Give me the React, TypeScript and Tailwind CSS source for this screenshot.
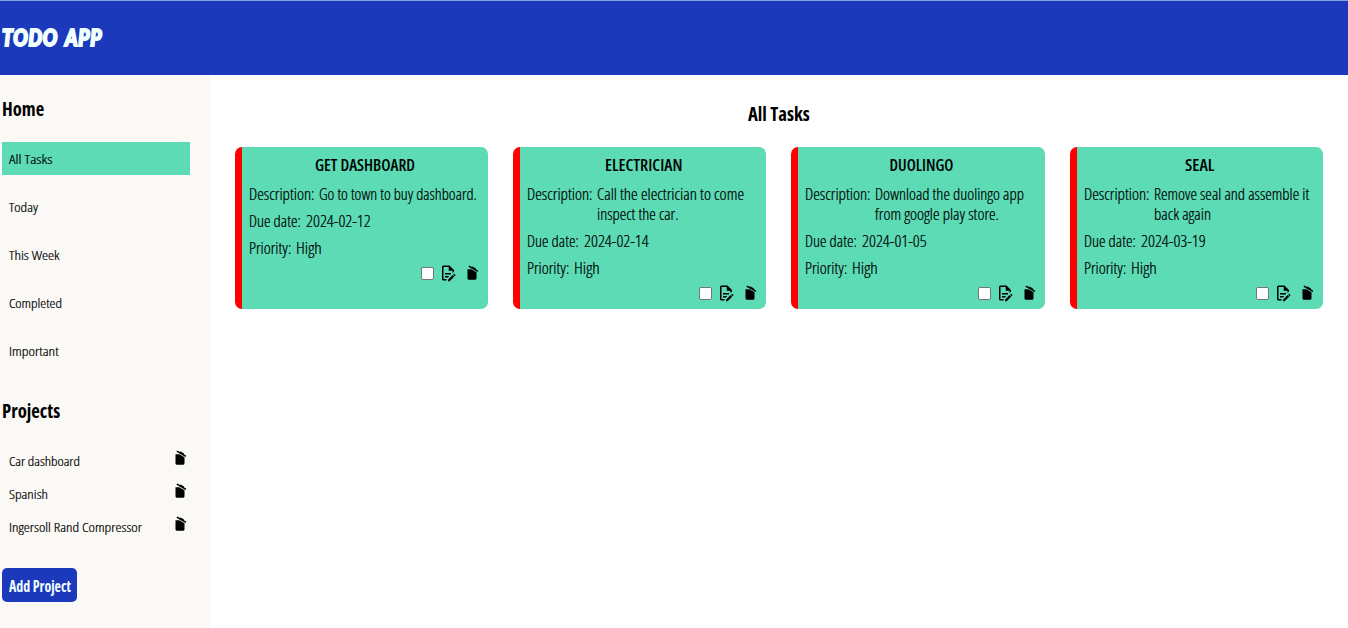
import { useLayoutEffect, useRef, useState } from "react";

type FitProps = { text: string; box: string; className?: string };

// Text condensed horizontally so that it fills the width of its box.
function Fit({ text, box, className = "" }: FitProps) {
  const outer = useRef<HTMLSpanElement>(null);
  const inner = useRef<HTMLSpanElement>(null);
  const [scale, setScale] = useState(1);

  useLayoutEffect(() => {
    if (outer.current && inner.current) {
      setScale(outer.current.offsetWidth / inner.current.offsetWidth);
    }
  }, [text]);

  return (
    <span ref={outer} className={`block shrink-0 whitespace-nowrap ${box} ${className}`}>
      <span
        ref={inner}
        className="inline-block origin-left align-top"
        style={{ transform: `scaleX(${scale})` }}
      >
        {text}
      </span>
    </span>
  );
}

function TrashIcon() {
  return (
    <svg viewBox="0 0 24 24" className="size-[18px] shrink-0 fill-black">
      <path d="M20.37,8.91L19.37,10.64L7.24,3.64L8.24,1.91L11.28,3.66L12.64,3.29L16.97,5.79L17.34,7.16L20.37,8.91M6,19V7H11.07L18,11V19A2,2 0 0,1 16,21H8A2,2 0 0,1 6,19Z" />
    </svg>
  );
}

function EditIcon() {
  return (
    <svg viewBox="0 0 24 24" className="size-[18px] shrink-0 fill-black">
      <path d="M8,12H16V14H8V12M10,20H6V4H13V9H18V12.1L20,10.1V8L14,2H6A2,2 0 0,0 4,4V20A2,2 0 0,0 6,22H10V20M8,18H12.1L13,17.1V16H8V18M20.2,13C20.3,13 20.5,13.1 20.6,13.2L21.9,14.5C22.1,14.7 22.1,15.1 21.9,15.3L20.9,16.3L18.8,14.2L19.8,13.2C19.9,13.1 20,13 20.2,13M20.2,16.9L14.1,23H12V20.9L18.1,14.8L20.2,16.9Z" />
    </svg>
  );
}

const filters = [
  { text: "All Tasks", box: "w-[43px]", active: true },
  { text: "Today", box: "w-[29px]" },
  { text: "This Week", box: "w-[50px]" },
  { text: "Completed", box: "w-[53px]" },
  { text: "Important", box: "w-[50px]" },
];

const projects = [
  { text: "Car dashboard", box: "w-[71px]" },
  { text: "Spanish", box: "w-[39px]" },
  { text: "Ingersoll Rand Compressor", box: "w-[133px]" },
];

const tasks = [
  {
    title: { text: "GET DASHBOARD", box: "w-[100px]" },
    lines: [{ text: "Go to town to buy dashboard.", box: "w-[158px]" }],
    due: "2024-02-12",
  },
  {
    title: { text: "ELECTRICIAN", box: "w-[77px]" },
    lines: [
      { text: "Call the electrician to come", box: "w-[147px]" },
      { text: "inspect the car.", box: "w-[81px]" },
    ],
    due: "2024-02-14",
  },
  {
    title: { text: "DUOLINGO", box: "w-[64px]" },
    lines: [
      { text: "Download the duolingo app", box: "w-[149px]" },
      { text: "from google play store.", box: "w-[124px]" },
    ],
    due: "2024-01-05",
  },
  {
    title: { text: "SEAL", box: "w-[29px]" },
    lines: [
      { text: "Remove seal and assemble it", box: "w-[155px]" },
      { text: "back again", box: "w-[57px]" },
    ],
    due: "2024-03-19",
  },
];

export default function App() {
  return (
    <div className="flex h-[628px] w-full flex-col overflow-hidden bg-white font-['Open_Sans','Noto_Sans',sans-serif] text-black [font-stretch:75%]">
      <header className="flex h-[75px] shrink-0 items-center border-t border-[#7fa5dc] bg-[#1c39bb] pl-[2px]">
        <h1 className="font-['Lato',sans-serif] text-[22px] leading-[30px] font-black tracking-[0.04em] text-[#f0ffff] italic [word-spacing:0.14em] [-webkit-text-stroke:2px_#f0ffff]">
          <Fit text="TODO APP" box="w-[100px]" />
        </h1>
      </header>

      <div className="flex min-h-0 flex-1">
        <aside className="w-[210px] shrink-0 bg-[#faf9f5] pt-[22px] pl-[2px]">
          <h2 className="text-[19px] leading-6 font-bold">
            <Fit text="Home" box="w-[42px]" />
          </h2>
          <ul className="mt-[21px] flex flex-col gap-[15px] text-[13.5px] font-light [-webkit-text-stroke:0.2px_#000]">
            {filters.map((f) => (
              <li
                key={f.text}
                className={`flex h-[33px] w-[188px] items-center pt-[2px] pl-[7px] ${f.active ? "bg-[#5cdbb5]" : ""}`}
              >
                <Fit text={f.text} box={f.box} />
              </li>
            ))}
          </ul>

          <h2 className="mt-[32px] text-[19px] leading-6 font-bold">
            <Fit text="Projects" box="w-[58px]" />
          </h2>
          <ul className="mt-[22px] flex flex-col text-[13.5px] font-light [-webkit-text-stroke:0.2px_#000]">
            {projects.map((p) => (
              <li key={p.text} className="flex h-[33px] w-[187px] items-center justify-between pl-[7px]">
                <Fit text={p.text} box={p.box} />
                <span className="pb-[7px]">
                  <TrashIcon />
                </span>
              </li>
            ))}
          </ul>

          <button className="mt-[24px] flex h-[34px] w-[75px] items-center justify-center rounded-[5px] bg-[#1c39bb] pt-[3px] text-[15.5px] font-bold text-[#f0ffff]">
            <Fit text="Add Project" box="w-[62px]" className="text-left" />
          </button>
        </aside>

        <main className="flex-1 pt-[27px] pr-[25px] pl-[24.8px]">
          <h2 className="flex justify-center text-[19px] leading-6 font-bold">
            <Fit text="All Tasks" box="w-[62px]" />
          </h2>
          <div className="mt-[21px] grid grid-cols-4 gap-[25.1px]">
            {tasks.map((t) => (
              <article
                key={t.due}
                className="flex h-[162px] flex-col rounded-[7px] border-l-[7px] border-[#ff0000] bg-[#5cdbb5] p-[7px] text-[15.5px] leading-5 font-light"
              >
                <h3 className="flex h-[22px] items-center justify-center text-[16px] font-semibold">
                  <Fit text={t.title.text} box={t.title.box} />
                </h3>
                <div className="mt-[8px] flex flex-col gap-[7px] [-webkit-text-stroke:0.2px_#000]">
                  <div className="flex gap-[5px]">
                    <Fit text="Description:" box="w-[65px]" />
                    <div>
                      {t.lines.map((l) => (
                        <Fit key={l.text} text={l.text} box={l.box} />
                      ))}
                    </div>
                  </div>
                  <div className="flex gap-[5px]">
                    <Fit text="Due date:" box="w-[52px]" />
                    <Fit text={t.due} box="w-[65px]" />
                  </div>
                  <div className="flex gap-[5px]">
                    <Fit text="Priority:" box="w-[42px]" />
                    <Fit text="High" box="w-[26px]" />
                  </div>
                </div>
                <div className="mt-[6px] flex items-center justify-end">
                  <input
                    type="checkbox"
                    aria-label="Done"
                    className="mr-[5px] size-[13px] appearance-none rounded-[2px] border border-[#767676] bg-white checked:appearance-auto"
                  />
                  <EditIcon />
                  <span className="ml-[6px] block">
                    <TrashIcon />
                  </span>
                </div>
              </article>
            ))}
          </div>
        </main>
      </div>
    </div>
  );
}
